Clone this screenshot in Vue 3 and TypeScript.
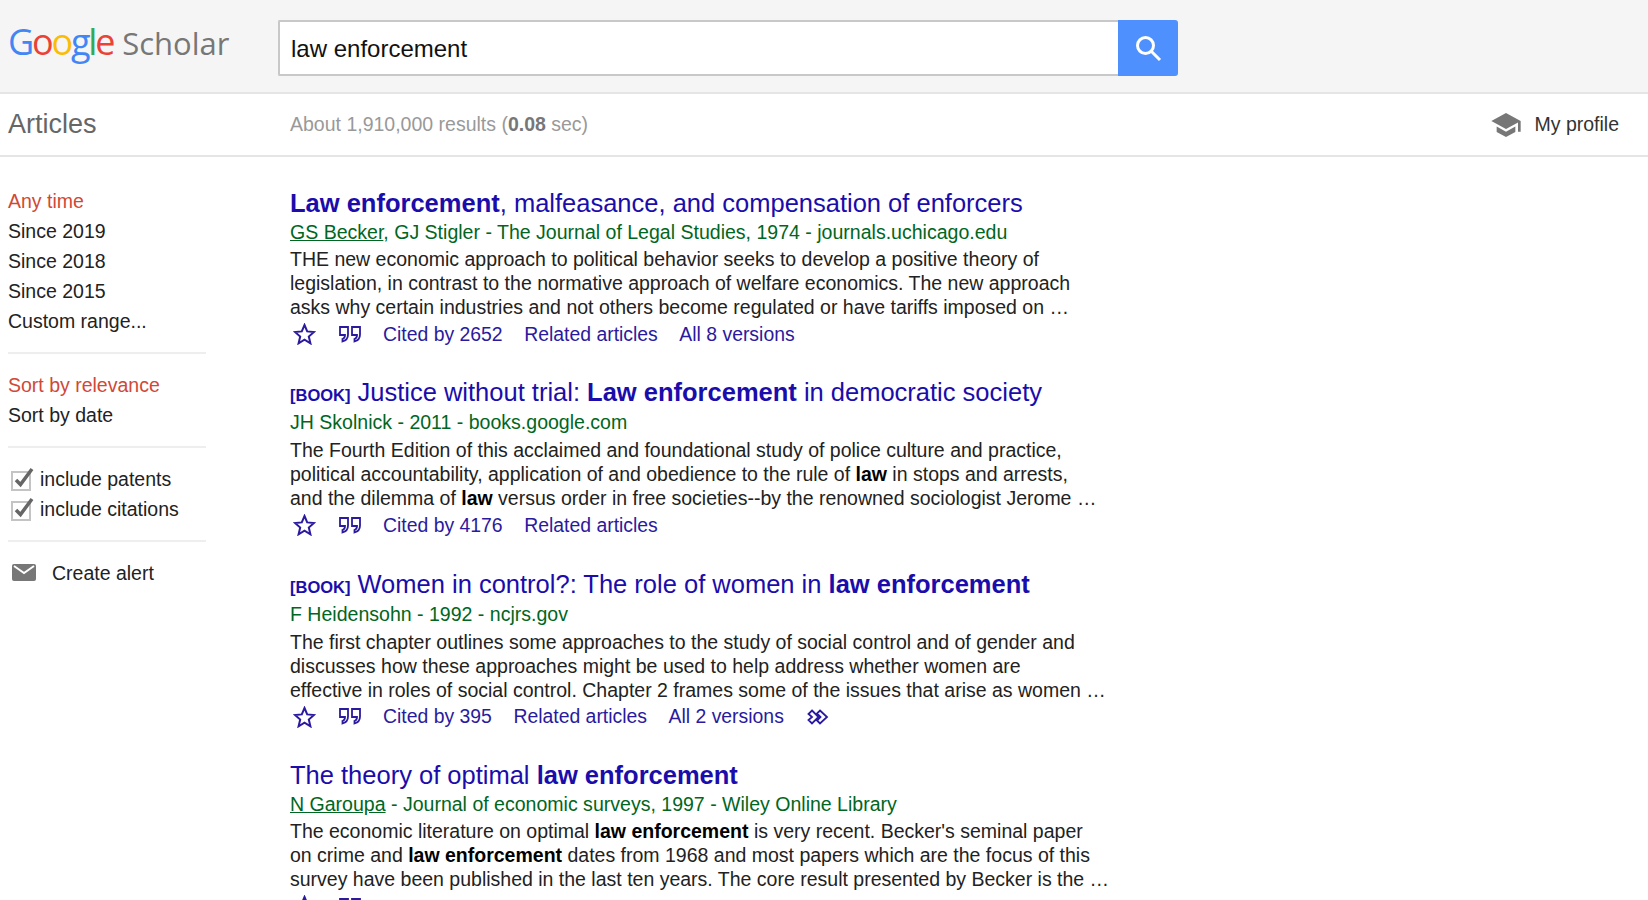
<script setup lang="ts">
interface Result {
  tag?: string
  title: string
  author?: string
  meta: string
  lines: string[]
  links: string[]
  more?: boolean
}

const results: Result[] = [
  {
    title: '*Law enforcement*, malfeasance, and compensation of enforcers',
    author: 'GS Becker',
    meta: ', GJ Stigler - The Journal of Legal Studies, 1974 - journals.uchicago.edu',
    lines: [
      'THE new economic approach to political behavior seeks to develop a positive theory of',
      'legislation, in contrast to the normative approach of welfare economics. The new approach',
      'asks why certain industries and not others become regulated or have tariffs imposed on …',
    ],
    links: ['Cited by 2652', 'Related articles', 'All 8 versions'],
  },
  {
    tag: '[BOOK]',
    title: 'Justice without trial: *Law enforcement* in democratic society',
    meta: 'JH Skolnick - 2011 - books.google.com',
    lines: [
      'The Fourth Edition of this acclaimed and foundational study of police culture and practice,',
      'political accountability, application of and obedience to the rule of *law* in stops and arrests,',
      'and the dilemma of *law* versus order in free societies--by the renowned sociologist Jerome …',
    ],
    links: ['Cited by 4176', 'Related articles'],
  },
  {
    tag: '[BOOK]',
    title: 'Women in control?: The role of women in *law enforcement*',
    meta: 'F Heidensohn - 1992 - ncjrs.gov',
    lines: [
      'The first chapter outlines some approaches to the study of social control and of gender and',
      'discusses how these approaches might be used to help address whether women are',
      'effective in roles of social control. Chapter 2 frames some of the issues that arise as women …',
    ],
    links: ['Cited by 395', 'Related articles', 'All 2 versions'],
    more: true,
  },
  {
    title: 'The theory of optimal *law enforcement*',
    author: 'N Garoupa',
    meta: ' - Journal of economic surveys, 1997 - Wiley Online Library',
    lines: [
      'The economic literature on optimal *law enforcement* is very recent. Becker\'s seminal paper',
      'on crime and *law enforcement* dates from 1968 and most papers which are the focus of this',
      'survey have been published in the last ten years. The core result presented by Becker is the …',
    ],
    links: [],
  },
]

const timeItems = ['Any time', 'Since 2019', 'Since 2018', 'Since 2015', 'Custom range...']
const googleLetters = [
  { c: 'G', color: '#4285f4' },
  { c: 'o', color: '#ea4335' },
  { c: 'o', color: '#fbbc05' },
  { c: 'g', color: '#4285f4' },
  { c: 'l', color: '#34a853' },
  { c: 'e', color: '#ea4335' },
]

// "a *b* c" -> odd pieces are the bold search hits
const pieces = (s: string) => s.split('*')
</script>

<template>
  <div class="page">
    <header class="top">
      <div class="logo">
        <span class="google"><span v-for="(l, i) in googleLetters" :key="i" :style="{ color: l.color }">{{ l.c }}</span></span>
        <span class="scholar">Scholar</span>
      </div>
      <div class="search">
        <div class="search-input">law enforcement</div>
        <div class="search-btn">
          <svg width="30" height="30" viewBox="0 0 30 30" fill="none" stroke="#fff" stroke-width="3">
            <circle cx="12.5" cy="12.5" r="8" />
            <path d="M18.5 18.500L27 27" />
          </svg>
        </div>
      </div>
    </header>

    <div class="subbar">
      <div class="section">Articles</div>
      <div class="count">About 1,910,000 results (<b>0.08</b> sec)</div>
      <div class="profile">
        <svg width="32" height="32" viewBox="0 0 24 24" fill="#777">
          <path d="M5 13.18v4L12 21l7-3.82v-4L12 17l-7-3.82zM12 3L1 9l11 6 9-4.91V17h2V9L12 3z" />
        </svg>
        <span>My profile</span>
      </div>
    </div>

    <div class="main">
      <aside class="side">
        <div v-for="(t, i) in timeItems" :key="t" class="side-item" :class="{ active: i === 0 }">{{ t }}</div>
        <div class="rule"></div>
        <div class="side-item active">Sort by relevance</div>
        <div class="side-item">Sort by date</div>
        <div class="rule"></div>
        <div v-for="t in ['include patents', 'include citations']" :key="t" class="side-item check">
          <svg width="24" height="24" viewBox="0 0 24 24" fill="none">
            <rect x="2" y="5" width="18" height="18" stroke="#c4c4c4" stroke-width="2" fill="#fff" />
            <path d="M6 13l4.500 4.500L22 2" stroke="#666" stroke-width="3.500" />
          </svg>
          <span>{{ t }}</span>
        </div>
        <div class="rule"></div>
        <div class="side-item alert">
          <svg width="24" height="18" viewBox="0 0 24 18">
            <rect width="24" height="17" rx="2" fill="#777" />
            <path d="M2 2l10 7L22 2" fill="none" stroke="#fff" stroke-width="2" />
          </svg>
          <span>Create alert</span>
        </div>
      </aside>

      <section class="results">
        <article v-for="r in results" :key="r.title" class="result" :class="{ book: r.tag }">
          <h3 class="title">
            <span v-if="r.tag" class="tag">{{ r.tag }}</span>
            <template v-for="(p, i) in pieces(r.title)" :key="i"><b v-if="i % 2">{{ p }}</b><template v-else>{{ p }}</template></template>
          </h3>
          <div class="meta"><u v-if="r.author">{{ r.author }}</u>{{ r.meta }}</div>
          <div class="body">
            <div v-for="line in r.lines" :key="line" class="line">
              <template v-for="(p, i) in pieces(line)" :key="i"><b v-if="i % 2">{{ p }}</b><template v-else>{{ p }}</template></template>
            </div>
          </div>
          <div class="actions">
            <svg class="star" width="23" height="22" viewBox="0 0 23 22" fill="none" stroke="#2a1a9e" stroke-width="2">
              <path d="M11.5 2l2.7 6.4 6.8.6-5.2 4.500 1.600 6.800-5.900-3.600-5.900 3.600 1.600-6.800L2 9l6.800-.6z" />
            </svg>
            <svg class="quote" width="23" height="17" viewBox="0 0 23 17" fill="none" stroke="#2a1a9e" stroke-width="1.800">
              <path d="M1 1h8v7.500C9 12 7.500 14.500 3.500 15.500V13C5 12.500 6 11 6 9H1zM13 1h8v7.500c0 3.500-1.500 6-5.500 7V13c1.500-.5 2.500-2 2.500-4h-5z" />
            </svg>
            <span v-for="l in r.links" :key="l" class="link">{{ l }}</span>
            <svg v-if="r.more" class="more" width="22" height="16" viewBox="0 0 22 16" fill="none" stroke="#2a1a9e" stroke-width="1.800">
              <path d="M5 1.500L11.500 8 5 14.500 1.500 11 5 8 1.500 5zM13 1.500L20 8l-7 6.500-3-3L13.500 8 10 4.500z" />
            </svg>
          </div>
        </article>
      </section>
    </div>
  </div>
</template>

<style>
html,
body {
  margin: 0;
  background: #fff;
}
</style>

<style scoped>
.page {
  height: 900px;
  overflow: hidden;
  font-family: "Liberation Sans", Arial, sans-serif;
  color: #222;
}

.top {
  display: flex;
  align-items: flex-start;
  height: 92px;
  background: #f5f5f5;
  border-bottom: 2px solid #e5e5e5;
}

.logo {
  width: 278px;
  flex: none;
  box-sizing: border-box;
  padding: 20px 0 0 8px;
  display: flex;
  align-items: baseline;
  gap: 9px;
  font-family: "Open Sans", sans-serif;
  line-height: 44px;
}

.google {
  font-size: 36px;
  font-weight: 500;
  letter-spacing: -2.200px;
}

.scholar {
  font-size: 31px;
  color: #777;
}

.search {
  display: flex;
  height: 56px;
  margin-top: 20px;
}

.search-input {
  width: 840px;
  box-sizing: border-box;
  background: #fff;
  border: 2px solid #c8c8c8;
  border-right: none;
  border-radius: 2px 0 0 2px;
  padding-left: 11px;
  font-size: 24px;
  line-height: 54px;
  color: #111;
}

.search-btn {
  width: 60px;
  background: #4d90fe;
  border-radius: 0 3px 3px 0;
  display: flex;
  align-items: center;
  justify-content: center;
}

.subbar {
  display: flex;
  align-items: center;
  height: 61px;
  border-bottom: 2px solid #e5e5e5;
}

.section {
  width: 282px;
  flex: none;
  padding-left: 8px;
  font-size: 27px;
  color: #666;
}

.count {
  flex: 1;
  font-size: 19.5px;
  color: #999;
}

.count b {
  color: #777;
}

.profile {
  display: flex;
  align-items: center;
  gap: 12px;
  padding-right: 29px;
  font-size: 19.5px;
  color: #333;
}

.main {
  display: flex;
  padding-top: 29px;
}

.side {
  width: 198px;
  flex: none;
  margin: 0 84px 0 8px;
}

.side-item {
  font-size: 19.5px;
  line-height: 30px;
  color: #222;
}

.side-item.active {
  color: #d14836;
}

.rule {
  height: 2px;
  margin: 16px 0;
  background: #eee;
}

.check {
  display: flex;
  align-items: center;
  gap: 6px;
  margin-left: 2px;
}

.alert {
  display: flex;
  align-items: center;
  gap: 16px;
  margin-left: 4px;
}

.results {
  padding-top: 2px;
}

.result {
  margin-bottom: 28px;
}

.book {
  margin-bottom: 28.500px;
}

.title {
  margin: 0;
  font-size: 25.5px;
  font-weight: normal;
  line-height: 30px;
  color: #1a0dab;
  white-space: nowrap;
}

.book .title {
  height: 31px;
}

.tag {
  font-size: 16.5px;
  font-weight: bold;
  line-height: 1;
  margin-right: 7px;
}

.meta {
  font-size: 19.55px;
  line-height: 29px;
  color: #006621;
  white-space: nowrap;
}

.book .meta {
  padding-bottom: 1px;
}

.line {
  font-size: 19.5px;
  line-height: 24px;
  white-space: nowrap;
}

.line b {
  color: #000;
}

.actions {
  display: flex;
  align-items: center;
  height: 30px;
  font-size: 19.4px;
  color: #2a1a9e;
}

.star {
  margin-left: 3px;
  margin-right: 23px;
}

.quote {
  margin-right: 21px;
}

.link {
  margin-right: 21.500px;
}

.more {
  margin-left: 2px;
}
</style>
